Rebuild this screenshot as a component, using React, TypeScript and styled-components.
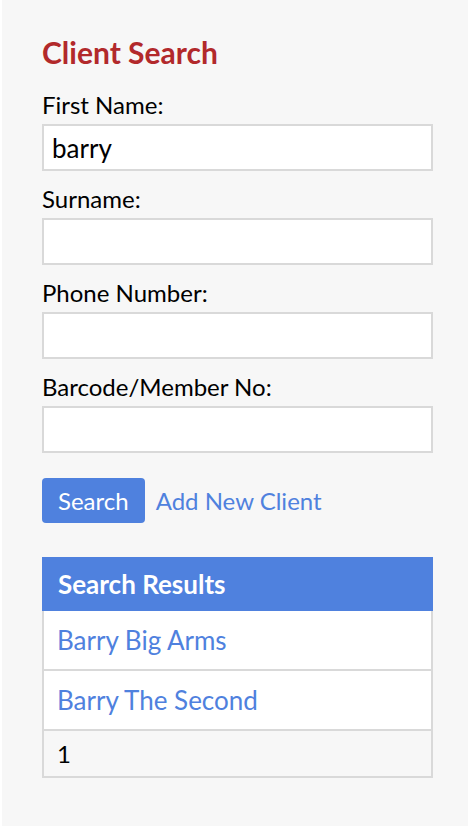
import React from 'react'
import styled, { createGlobalStyle } from 'styled-components'

const GlobalStyle = createGlobalStyle`
  html, body {
    margin: 0;
    padding: 0;
    background: #ffffff;
  }
  body {
    font-family: Lato, 'Open Sans', 'Liberation Sans', sans-serif;
    color: #000000;
  }
`

const Panel = styled.div`
  margin-left: 2px;
  min-height: 826px;
  box-sizing: border-box;
  background: #f7f7f7;
  padding: 35px 35px 0 40px;
`

const Title = styled.h2`
  margin: 0 0 23px;
  font-size: 30px;
  line-height: 34px;
  font-weight: 700;
  color: #b2292b;
`

const Field = styled.div`
  display: flex;
  flex-direction: column;
  margin-bottom: 15px;
`

const Label = styled.label`
  font-size: 24px;
  line-height: 26px;
  margin-bottom: 6px;
`

const Input = styled.input`
  box-sizing: border-box;
  width: 100%;
  height: 47px;
  border: 2px solid #d9d9d9;
  background: #ffffff;
  padding: 0 8px;
  font-family: inherit;
  font-size: 26px;
  color: #000000;
  outline: none;
`

// margin collapses with the last field's 15px
const Actions = styled.div`
  display: flex;
  align-items: center;
  gap: 11px;
  margin-top: 25px;
`

const Button = styled.button`
  height: 45px;
  padding: 0 16px;
  border: none;
  border-radius: 4px;
  background: #4f81de;
  color: #ffffff;
  font-family: inherit;
  font-size: 24px;
`

const Link = styled.a<{ $size?: number }>`
  color: #4f81de;
  text-decoration: none;
  font-size: ${(p) => p.$size ?? 24}px;
  cursor: pointer;
`

const Results = styled.div`
  margin-top: 34px;
  display: flex;
  flex-direction: column;
`

const ResultsHeader = styled.div`
  height: 54px;
  display: flex;
  align-items: center;
  padding: 0 16px;
  background: #4f81de;
  color: #ffffff;
  font-size: 26px;
  font-weight: 700;
`

const Row = styled.div<{ $footer?: boolean }>`
  display: flex;
  align-items: center;
  height: ${(p) => (p.$footer ? 45 : 58)}px;
  padding: 0 13px;
  border: 2px solid #d9d9d9;
  border-top: none;
  background: ${(p) => (p.$footer ? '#f7f7f7' : '#ffffff')};
  font-size: 24px;
`

const results = ['Barry Big Arms', 'Barry The Second']

export default function App() {
  return (
    <>
      <GlobalStyle />
      <Panel>
        <Title>Client Search</Title>
        <Field>
          <Label>First Name:</Label>
          <Input defaultValue="barry" />
        </Field>
        <Field>
          <Label>Surname:</Label>
          <Input />
        </Field>
        <Field>
          <Label>Phone Number:</Label>
          <Input />
        </Field>
        <Field>
          <Label>Barcode/Member No:</Label>
          <Input />
        </Field>
        <Actions>
          <Button>Search</Button>
          <Link>Add New Client</Link>
        </Actions>
        <Results>
          <ResultsHeader>Search Results</ResultsHeader>
          {results.map((name) => (
            <Row key={name}>
              <Link $size={26}>{name}</Link>
            </Row>
          ))}
          <Row $footer>1</Row>
        </Results>
      </Panel>
    </>
  )
}
